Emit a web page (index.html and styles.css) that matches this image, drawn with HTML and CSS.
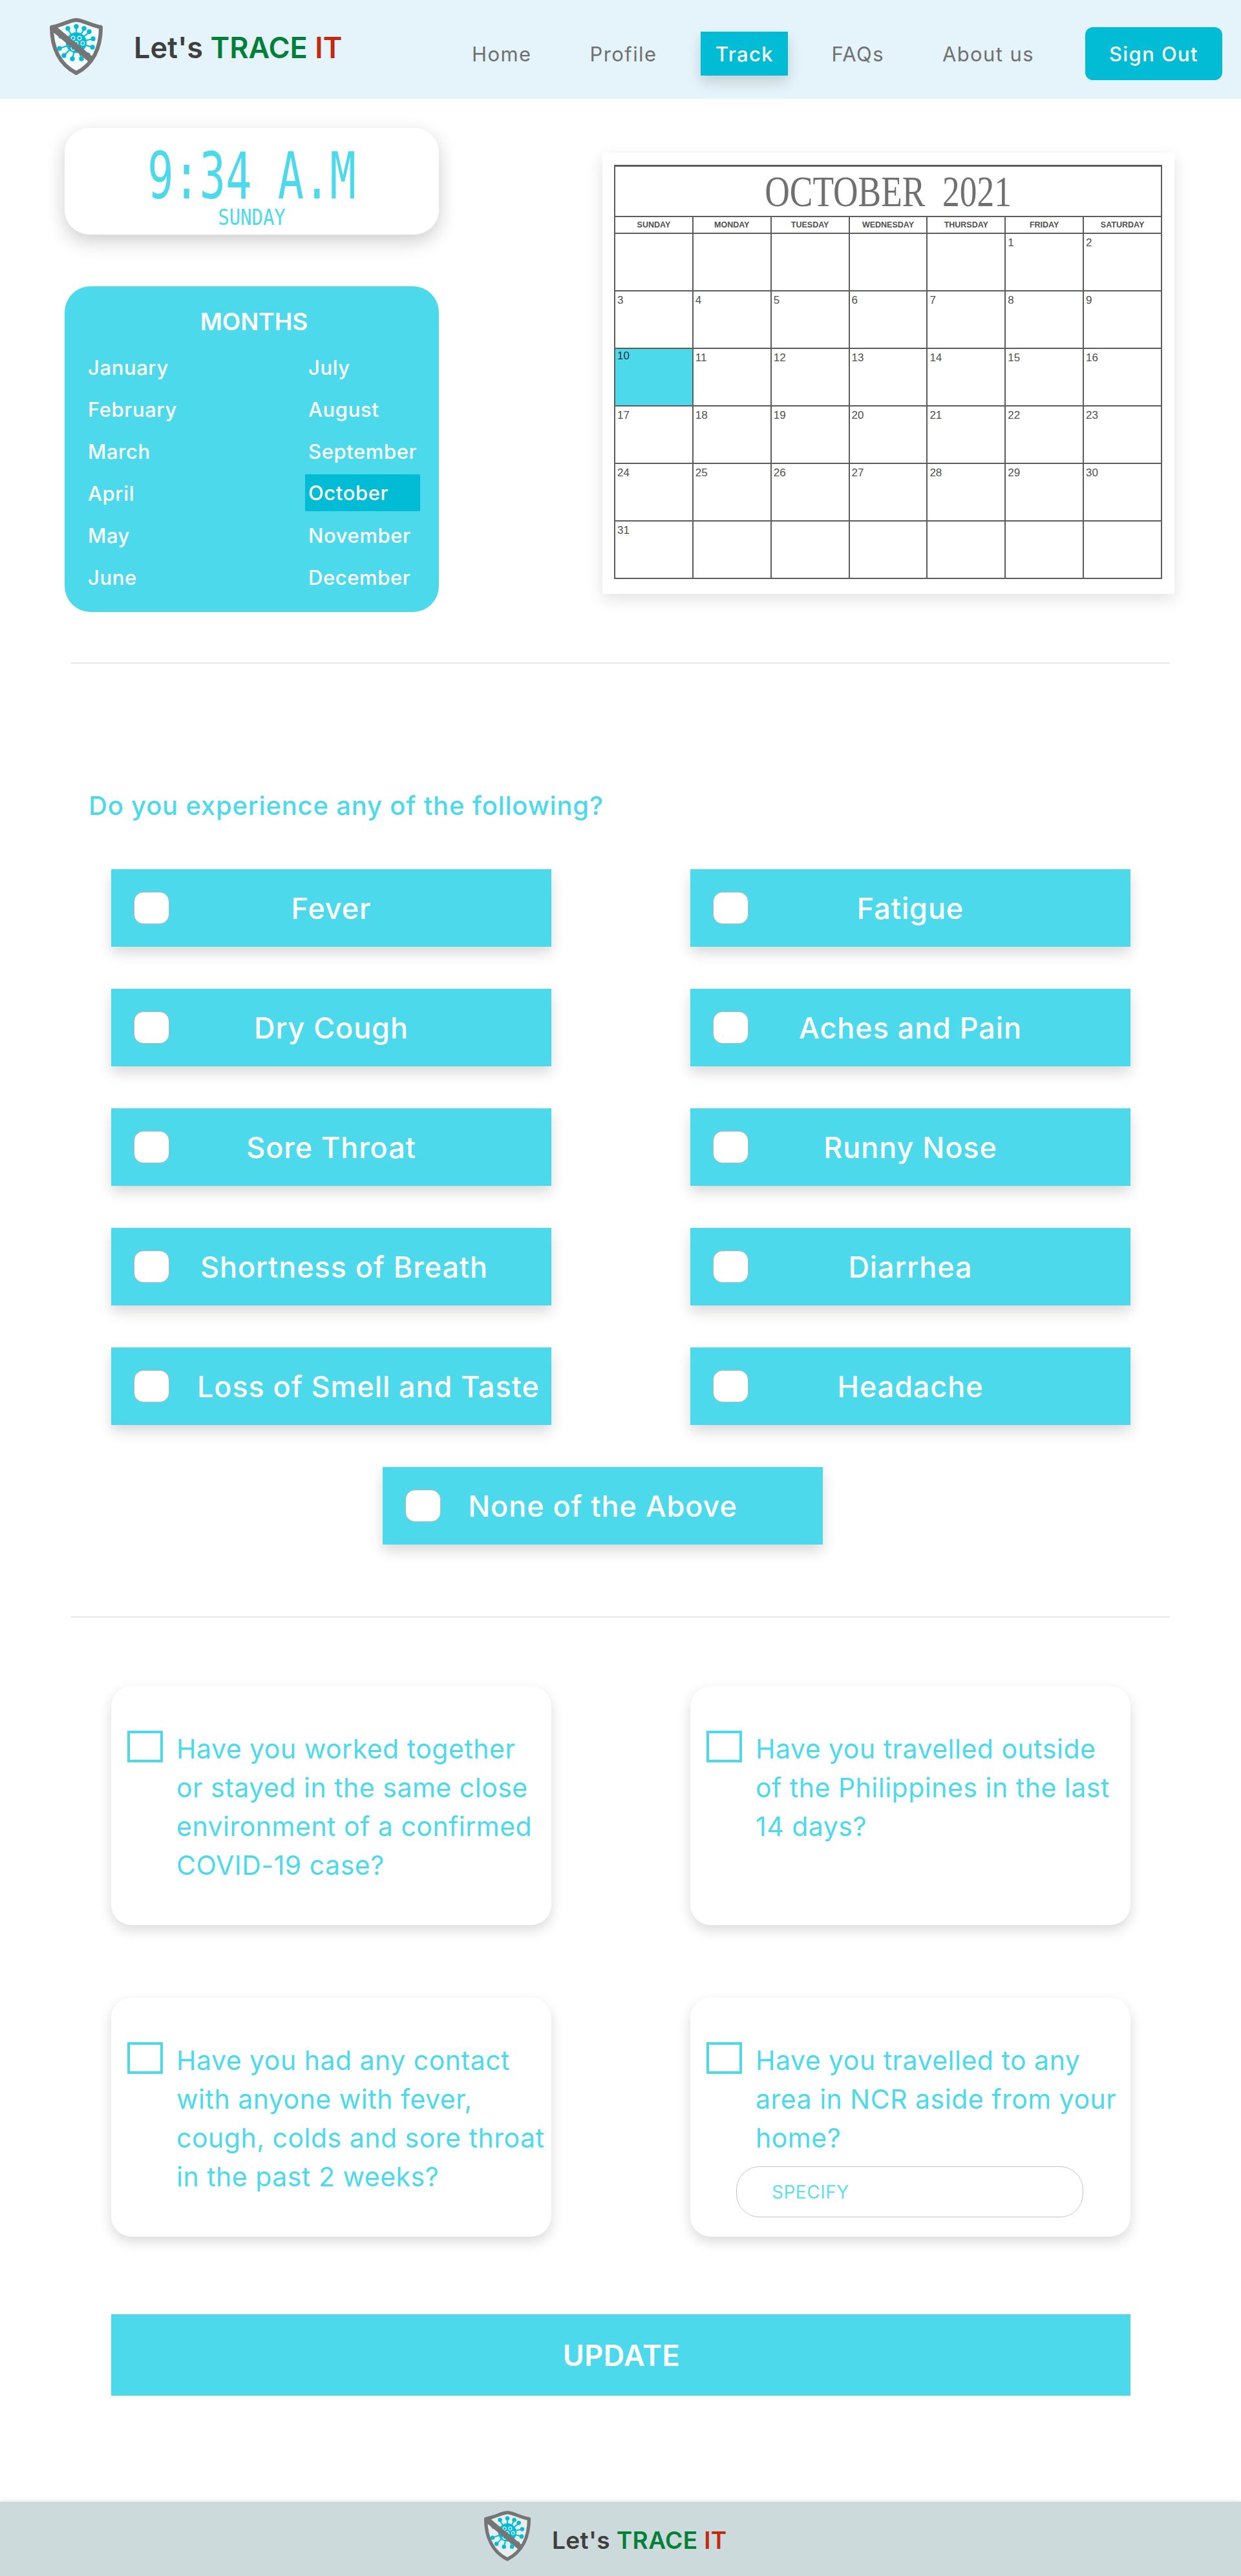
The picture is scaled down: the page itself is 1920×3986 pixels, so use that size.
FILE: index.html
```html
<!DOCTYPE html>
<html lang="en">
<head>
    <meta charset="UTF-8">
    <meta name="viewport" content="width=device-width, initial-scale=1.0">
    <title>Let's TRACE IT - Track</title>
    <link rel="stylesheet" href="styles.css">
</head>
<body>
    <svg class="defs" width="0" height="0">
        <symbol id="shield" viewBox="0 0 84 88">
            <path d="M42 3C32 3 21 11 4 14C4 46 16 72 42 85C68 72 80 46 80 14C63 11 52 3 42 3Z" fill="#fff" fill-opacity=".55" stroke="#757575" stroke-width="6" stroke-linejoin="round"/>
            <g stroke="#02bcd6" stroke-width="2.2" stroke-linecap="round" fill="#02bcd6">
                <circle cx="42" cy="38" r="16" stroke="none"/>
                <path d="M42 38V14M42 38L54 17M42 38L62 22M42 38L68 32M42 38L67 45M42 38L60 57M42 38L50 63M42 38L36 63M42 38L23 58M42 38L16 47M42 38L18 28M42 38L29 17"/>
                <circle cx="42" cy="13" r="2.6"/><circle cx="54" cy="16" r="2.6"/><circle cx="62" cy="21" r="2.6"/><circle cx="68" cy="32" r="2.6"/>
                <circle cx="67" cy="45" r="2.6"/><circle cx="60" cy="57" r="2.6"/><circle cx="50" cy="63" r="2.6"/><circle cx="36" cy="63" r="2.6"/>
                <circle cx="23" cy="58" r="2.6"/><circle cx="16" cy="47" r="2.6"/><circle cx="18" cy="28" r="2.6"/><circle cx="29" cy="16" r="2.6"/>
            </g>
            <g fill="none" stroke="#fff" stroke-width="1.2">
                <circle cx="37" cy="31" r="2.8"/><circle cx="47" cy="31" r="2.8"/><circle cx="42" cy="39" r="2.8"/><circle cx="52" cy="39" r="2.8"/><circle cx="37" cy="47" r="2.8"/>
            </g>
            <path d="M7 16L67 66" stroke="#757575" stroke-width="10"/>
        </symbol>
    </svg>

    <header class="navbar">
        <a class="brand" href="#">
            <svg class="brand-logo"><use href="#shield"/></svg>
            <span class="brand-name">Let's <span class="green">TRACE</span> <span class="red">IT</span></span>
        </a>
        <nav class="nav-links">
            <a href="#">Home</a>
            <a href="#">Profile</a>
            <a href="#" class="active">Track</a>
            <a href="#">FAQs</a>
            <a href="#">About us</a>
            <a href="#" class="signout">Sign Out</a>
        </nav>
    </header>

    <section class="overview">
        <div class="side">
            <div class="clock">
                <div class="clock-time">9:34 A.M</div>
                <div class="clock-day">SUNDAY</div>
            </div>
            <div class="months">
                <h3>MONTHS</h3>
                <ul>
                    <li>January</li><li>July</li>
                    <li>February</li><li>August</li>
                    <li>March</li><li>September</li>
                    <li>April</li><li class="current">October</li>
                    <li>May</li><li>November</li>
                    <li>June</li><li>December</li>
                </ul>
            </div>
        </div>
        <div class="calendar-card">
            <table class="calendar">
                <tr class="cal-title"><th colspan="7"><span>OCTOBER&nbsp; 2021</span></th></tr>
                <tr class="cal-head">
                    <th>SUNDAY</th><th>MONDAY</th><th>TUESDAY</th><th>WEDNESDAY</th><th>THURSDAY</th><th>FRIDAY</th><th>SATURDAY</th>
                </tr>
                <tr><td></td><td></td><td></td><td></td><td></td><td>1</td><td>2</td></tr>
                <tr><td>3</td><td>4</td><td>5</td><td>6</td><td>7</td><td>8</td><td>9</td></tr>
                <tr><td class="today">10</td><td>11</td><td>12</td><td>13</td><td>14</td><td>15</td><td>16</td></tr>
                <tr><td>17</td><td>18</td><td>19</td><td>20</td><td>21</td><td>22</td><td>23</td></tr>
                <tr><td>24</td><td>25</td><td>26</td><td>27</td><td>28</td><td>29</td><td>30</td></tr>
                <tr><td>31</td><td></td><td></td><td></td><td></td><td></td><td></td></tr>
            </table>
        </div>
    </section>

    <hr class="divider">

    <h2 class="ask">Do you experience any of the following?</h2>

    <section class="symptoms">
        <label class="symptom"><span class="tick"></span>Fever</label>
        <label class="symptom"><span class="tick"></span>Fatigue</label>
        <label class="symptom"><span class="tick"></span>Dry Cough</label>
        <label class="symptom"><span class="tick"></span>Aches and Pain</label>
        <label class="symptom"><span class="tick"></span>Sore Throat</label>
        <label class="symptom"><span class="tick"></span>Runny Nose</label>
        <label class="symptom breath"><span class="tick"></span>Shortness of Breath</label>
        <label class="symptom"><span class="tick"></span>Diarrhea</label>
        <label class="symptom smell"><span class="tick"></span>Loss of Smell and Taste</label>
        <label class="symptom"><span class="tick"></span>Headache</label>
        <label class="symptom none"><span class="tick"></span>None of the Above</label>
    </section>

    <hr class="divider second">

    <section class="questions">
        <div class="question">
            <span class="box"></span>
            <p>Have you worked together<br>or stayed in the same close<br>environment of a confirmed<br>COVID-19 case?</p>
        </div>
        <div class="question">
            <span class="box"></span>
            <p>Have you travelled outside<br>of the Philippines in the last<br>14 days?</p>
        </div>
        <div class="question">
            <span class="box"></span>
            <p>Have you had any contact<br>with anyone with fever,<br>cough, colds and sore throat<br>in the past 2 weeks?</p>
        </div>
        <div class="question">
            <span class="box"></span>
            <div>
                <p>Have you travelled to any<br>area in NCR aside from your<br>home?</p>
                <div class="specify">SPECIFY</div>
            </div>
        </div>
    </section>

    <button class="update">UPDATE</button>

    <footer class="footer">
        <svg class="footer-logo"><use href="#shield"/></svg>
        <span class="brand-name small">Let's <span class="green">TRACE</span> <span class="red">IT</span></span>
    </footer>
</body>
</html>
```

FILE: styles.css
```css
* {
    box-sizing: border-box;
}
body {
    margin: 0;
    font-family: Inter, "Open Sans", sans-serif;
    background: white;
    color: #4dd9ec;
}
.defs {
    display: block;
}

/* navbar */
.navbar {
    display: flex;
    align-items: center;
    height: 153px;
    padding: 0 29px 0 76px;
    background-color: #e5f4fa;
}
.brand {
    display: flex;
    align-items: center;
    gap: 47px;
    text-decoration: none;
    margin-top: -10px;
}
.brand-logo {
    width: 84px;
    height: 88px;
}
.brand-name {
    padding-top: 4px;
    font-size: 45px;
    font-weight: 600;
    color: #403e3e;
    white-space: nowrap;
}
.green {
    color: #037f38;
}
.red {
    color: #c12a10;
}
.nav-links {
    display: flex;
    align-items: center;
    margin-left: auto;
    margin-top: 13px;
}
.nav-links a {
    color: #707070;
    font-size: 31px;
    text-decoration: none;
    margin-left: 90px;
    letter-spacing: 1.4px;
}
.nav-links a.active {
    display: flex;
    align-items: center;
    justify-content: center;
    width: 135px;
    height: 68px;
    margin-left: 68px;
    margin-right: -23px;
    background-color: #02bcd6;
    color: white;
    font-weight: 500;
    box-shadow: 0 10px 20px rgba(0, 0, 0, 0.15);
}
.nav-links a.signout {
    display: flex;
    align-items: center;
    justify-content: center;
    width: 212px;
    height: 82px;
    margin-left: 79px;
    background-color: #02bcd6;
    border-radius: 12px;
    color: white;
    font-weight: 500;
}

/* clock, months, calendar */
.overview {
    display: flex;
    padding-left: 100px;
}
.side {
    width: 579px;
    margin-right: 253px;
    padding-top: 45px;
}
.clock {
    height: 165px;
    padding-top: 31px;
    background: white;
    border-radius: 38px;
    box-shadow: 0 10px 30px rgba(0, 0, 0, 0.2);
    text-align: center;
    overflow: hidden;
}
.clock-time {
    font-family: "DejaVu Sans Mono", monospace;
    font-size: 100px;
    line-height: 88px;
    white-space: nowrap;
    transform: scaleX(.67);
}
.clock-day {
    font-family: "DejaVu Sans Mono", monospace;
    font-size: 34px;
    line-height: 30px;
    margin-top: 4px;
    transform: scaleX(.85);
}
.months {
    height: 504px;
    margin-top: 80px;
    padding: 31px 29px 0 36px;
    background-color: #4dd9ec;
    border-radius: 40px;
    color: white;
}
.months h3 {
    margin: 0 0 14px;
    font-size: 37px;
    font-weight: 600;
    line-height: 48px;
    text-align: center;
}
.months ul {
    display: grid;
    grid-template-columns: 336px 178px;
    grid-auto-rows: 65px;
    margin: 0;
    padding: 0;
    list-style: none;
    font-size: 31px;
    font-weight: 500;
}
.months li {
    display: flex;
    align-items: center;
    letter-spacing: .6px;
}
.months li:nth-child(even) {
    padding-left: 5px;
}
.months li.current {
    height: 57px;
    margin-top: 3px;
    background-color: #02bcd6;
}
.calendar-card {
    width: 885px;
    height: 683px;
    margin-top: 83px;
    padding: 19px 18px;
    background: white;
    box-shadow: 0 8px 24px rgba(0, 0, 0, 0.12);
}
.calendar {
    width: 848px;
    border-collapse: collapse;
    table-layout: fixed;
    color: #505050;
    font-family: "Liberation Sans", Arial, sans-serif;
}
.calendar td,
.calendar th {
    border: 2px solid #5c5c5c;
    padding: 0;
}
.calendar td {
    height: 89px;
    padding: 5px 0 0 3px;
    font-size: 17px;
    line-height: 18px;
    vertical-align: top;
}
.calendar td.today {
    background-color: #4dd9ec;
    color: #303030;
    padding-top: 2px;
}
.cal-title th {
    height: 78px;
    border-top-width: 3px;
    font-family: "Liberation Serif", serif;
    font-size: 68px;
    font-weight: normal;
    line-height: 70px;
    color: #707070;
}
.cal-title span {
    display: inline-block;
    white-space: nowrap;
    transform: scaleX(.785);
}
.cal-head th {
    height: 26px;
    font-size: 12.5px;
    line-height: 14px;
}

.divider {
    width: 1700px;
    height: 2px;
    margin: 78px 0 0 110px;
    border: none;
    background-color: #e6e6e6;
}
.divider.second {
    margin-top: 111px;
}

/* symptoms */
.ask {
    margin: 192px 0 0 137px;
    font-size: 40px;
    font-weight: 500;
    line-height: 56px;
    letter-spacing: .8px;
}
.symptoms {
    display: grid;
    grid-template-columns: 681px 681px;
    grid-auto-rows: 120px;
    column-gap: 215px;
    row-gap: 65px;
    margin-top: 70px;
    padding-left: 172px;
}
.symptom {
    position: relative;
    display: flex;
    align-items: center;
    justify-content: center;
    background-color: #4dd9ec;
    box-shadow: 0 10px 20px rgba(0, 0, 0, 0.15);
    color: white;
    font-size: 45px;
    font-weight: 500;
    letter-spacing: .9px;
    white-space: nowrap;
}
.symptom.breath {
    justify-content: flex-start;
    padding-left: 138px;
}
.symptom.smell {
    justify-content: flex-start;
    padding-left: 133px;
}
.symptom.none {
    grid-column: 1 / -1;
    width: 681px;
    margin-left: 420px;
}
.tick {
    position: absolute;
    left: 35px;
    top: 35px;
    width: 55px;
    height: 50px;
    background: white;
    border: 1px solid #b5b5b5;
    border-radius: 15px;
}

/* questions */
.questions {
    display: grid;
    grid-template-columns: 681px 681px;
    grid-auto-rows: 370px;
    column-gap: 215px;
    row-gap: 112px;
    margin-top: 106px;
    padding-left: 172px;
}
.question {
    display: flex;
    align-items: flex-start;
    padding: 69px 0 0 25px;
    background: white;
    border-radius: 32px;
    box-shadow: 0 8px 20px rgba(0, 0, 0, 0.15);
}
.box {
    flex: none;
    width: 55px;
    height: 49px;
    margin-right: 21px;
    border: 4px solid #4dd9ec;
}
.question p {
    margin: -2px 0 2px;
    font-size: 41px;
    line-height: 60px;
    letter-spacing: .5px;
    white-space: nowrap;
}
.specify {
    display: flex;
    align-items: center;
    width: 537px;
    height: 79px;
    margin: 14px 0 0 -30px;
    padding-left: 54px;
    border: 1px solid #c4c4c4;
    border-radius: 36px;
    font-size: 28px;
    letter-spacing: .5px;
    color: #5fdfee;
}

.update {
    display: block;
    width: 1577px;
    height: 126px;
    margin: 120px 0 0 172px;
    padding-left: 8px;
    border: none;
    background-color: #4dd9ec;
    color: white;
    font-family: inherit;
    font-size: 45px;
    font-weight: 600;
    letter-spacing: .5px;
}

.footer {
    display: flex;
    align-items: center;
    height: 115px;
    margin-top: 164px;
    padding-left: 748px;
    background-color: #cddadc;
    box-shadow: 0 -2px 6px rgba(0, 0, 0, 0.08);
}
.footer-logo {
    width: 74px;
    height: 78px;
    margin-right: 32px;
    margin-bottom: 10px;
}
.brand-name.small {
    font-size: 37px;
    padding-top: 4px;
    letter-spacing: .4px;
}
```
